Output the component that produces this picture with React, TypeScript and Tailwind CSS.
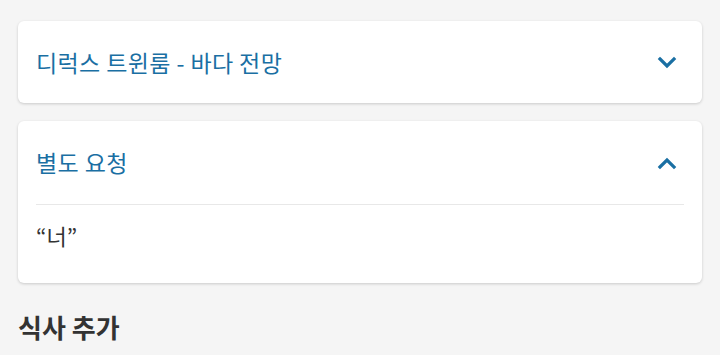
const font = { fontFamily: '"Noto Sans CJK KR", "Noto Sans", sans-serif' };

function Chevron({ up }: { up?: boolean }) {
  return (
    <svg width="24" height="24" viewBox="0 0 24 24" fill="none" stroke="#1a6fa3" strokeWidth="3.2" strokeLinecap="square">
      {up ? <path d="M5 16l7-7 7 7" /> : <path d="M5 9l7 7 7-7" />}
    </svg>
  );
}

export default function App() {
  return (
    <div className="w-[720px] h-[355px] bg-[#f5f5f5] px-[18px] pt-[21px] overflow-hidden" style={font}>
      {/* Room card */}
      <div className="bg-white rounded-md shadow-[0_1px_3px_rgba(0,0,0,0.18)] h-[82px] flex items-center justify-between pl-[18px] pr-[23px]">
        <span className="text-[23px] tracking-[0.4px] text-[#1a6fa3]">디럭스 트윈룸 - 바다 전망</span>
        <Chevron />
      </div>

      {/* Special request */}
      <div className="mt-[18px] bg-white rounded-md shadow-[0_1px_3px_rgba(0,0,0,0.18)] h-[162px] px-[18px]">
        <div className="h-[83px] flex items-center justify-between pr-[5px]">
          <span className="text-[23px] tracking-[0.4px] text-[#1a6fa3]">별도 요청</span>
          <Chevron up />
        </div>
        <div className="border-t border-[#e8e8e8] pt-[14px]">
          <span className="text-[22px] text-[#333]">“너”</span>
        </div>
      </div>

      <div className="mt-[24px] text-[26px] font-bold text-[#333]">식사 추가</div>
    </div>
  );
}
